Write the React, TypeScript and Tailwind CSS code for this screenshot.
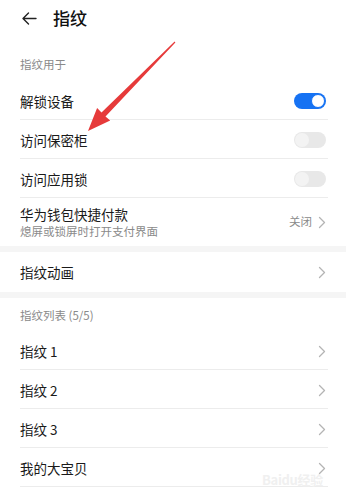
import React from "react";

const Chevron = () => (
  <svg width="8" height="13" viewBox="0 0 8 13" fill="none">
    <path d="M1.5 1.5 L6.5 6.5 L1.5 11.5" stroke="#b4b4b4" strokeWidth="1.3" strokeLinecap="round" strokeLinejoin="round" />
  </svg>
);

const Toggle = ({ on }: { on: boolean }) =>
  on ? (
    <div className="w-[32px] h-[16px] rounded-full bg-[#1672f3] flex items-center justify-end pr-[1px]">
      <div className="w-[14px] h-[14px] rounded-full bg-white border border-[#1672f3]" />
    </div>
  ) : (
    <div className="w-[32px] h-[16px] rounded-full bg-[#e8e8e8] flex items-center justify-start pl-[1px]">
      <div className="w-[14px] h-[14px] rounded-full bg-[#f3f3f3]" />
    </div>
  );

const Row = ({ label, right, border = true }: { label: string; right: React.ReactNode; border?: boolean }) => (
  <div className={`h-[39px] flex items-center justify-between pt-[2px] pr-[2px] ${border ? "border-b border-[#ececec]" : ""}`}>
    <span className="text-[13.5px] text-[#1a1a1a]">{label}</span>
    {right}
  </div>
);

export default function App() {
  return (
    <div
      className="relative w-[346px] h-[500px] bg-white overflow-hidden"
      style={{ fontFamily: '"Noto Sans CJK SC", "Noto Sans", sans-serif' }}
    >
      {/* header */}
      <div className="h-[36px] flex items-center pl-[22px]">
        <svg width="15" height="13" viewBox="0 0 15 13" fill="none">
          <path d="M14 6.5 H1.5 M6.5 1 L1 6.5 L6.5 12" stroke="#222" strokeWidth="1.4" strokeLinecap="round" strokeLinejoin="round" />
        </svg>
        <span className="ml-[16px] text-[17px] text-[#111] font-medium">指纹</span>
      </div>

      <div className="px-[20px] pr-[18px]">
        <div className="h-[45px] flex items-end pb-[8px]">
          <span className="text-[11.5px] text-[#8a8a8a]">指纹用于</span>
        </div>
        <Row label="解锁设备" right={<Toggle on />} />
        <Row label="访问保密柜" right={<Toggle on={false} />} />
        <Row label="访问应用锁" right={<Toggle on={false} />} />
        <div className="h-[48px] flex items-center justify-between pr-[2px]">
          <div className="flex flex-col">
            <span className="text-[13.5px] text-[#1a1a1a] leading-[18px]">华为钱包快捷付款</span>
            <span className="text-[11.5px] text-[#8a8a8a] leading-[17px]">熄屏或锁屏时打开支付界面</span>
          </div>
          <div className="flex items-center gap-[6px]">
            <span className="text-[11.5px] text-[#8a8a8a]">关闭</span>
            <Chevron />
          </div>
        </div>
      </div>

      <div className="h-[6px] bg-[#f5f5f5]" />

      <div className="px-[20px] pr-[18px]">
        <div className="h-[40px] flex items-center justify-between pr-[2px]">
          <span className="text-[13.5px] text-[#1a1a1a]">指纹动画</span>
          <Chevron />
        </div>
      </div>

      <div className="h-[6px] bg-[#f5f5f5]" />

      <div className="px-[20px] pr-[18px]">
        <div className="h-[33px] flex items-center pt-[3px]">
          <span className="text-[11.5px] text-[#8a8a8a]">指纹列表 (5/5)</span>
        </div>
        <Row label="指纹 1" right={<Chevron />} />
        <Row label="指纹 2" right={<Chevron />} />
        <Row label="指纹 3" right={<Chevron />} />
        <Row label="我的大宝贝" right={<Chevron />} />
      </div>

      {/* watermark */}
      <div className="absolute left-[262px] top-[470px] text-[13px] text-[#f0f0f0] font-bold tracking-tight">Baidu经验</div>

      {/* red arrow overlay */}
      <svg className="absolute left-0 top-0" width="346" height="500" viewBox="0 0 346 500">
        <polygon
          points="88,131 97.1,107.9 101.5,112.4 174.6,41.6 175.4,42.4 105.5,116.4 110.2,120.6"
          fill="#e63a3a"
        />
      </svg>
    </div>
  );
}
